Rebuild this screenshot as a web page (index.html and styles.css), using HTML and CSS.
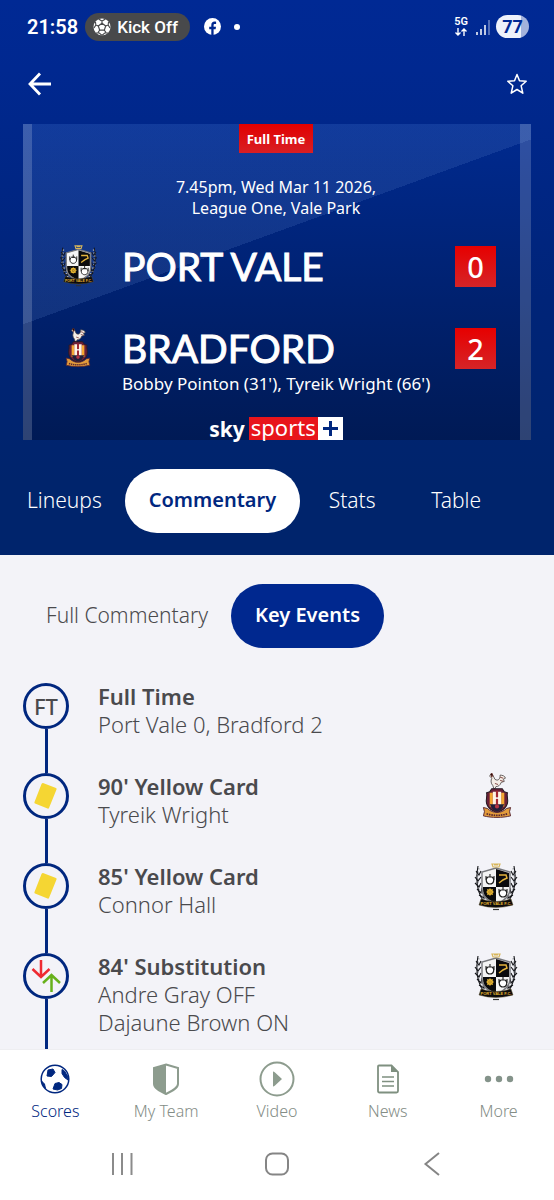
FILE: index.html
```html
<!DOCTYPE html>
<html lang="en">
<head>
<meta charset="utf-8">
<meta name="viewport" content="width=device-width, initial-scale=1">
<title>Port Vale 0, Bradford 2 - Key Events</title>
<link rel="stylesheet" href="styles.css">
</head>
<body>
<svg class="defs" aria-hidden="true">
  <defs>
    <symbol id="port-vale" viewBox="0 0 42 48">
      <g fill="none" stroke="#b4b6bb" stroke-width="2.600"><path d="M3.500 5C1 15 2 28 10 38M38.500 5c2.500 10 1.500 23-6.500 33" stroke-dasharray="1.500 2"/></g>
      <g fill="none" stroke="#15161a" stroke-width="1.100"><path d="M3 3C1 14 1 28 9 39M39 3c2 11 2 25-6 36"/><path d="M1 8l3 4 2-4M0 14l3 4 3-4M0 20l4 4 2-4M2 26l4 4 1-5M4 32l5 3v-5M41 8l-3 4-2-4M42 14l-3 4-3-4M42 20l-4 4-2-4M40 26l-4 4-1-5M38 32l-5 3v-5"/></g>
      <path d="M21 5l14 4v17c0 8-6 12-14 15C13 38 7 34 7 26V9z" fill="#f4f4f4" stroke="#77787c" stroke-width="1.400"/>
      <path d="M21 6l13 4v14H21zM8 24h13v16C13 37 8 33 8 26z" fill="#0b0b0d"/>
      <path d="M17 1h8l-1 3h-6zM19 2h4" fill="none" stroke="#d8b65a" stroke-width="1.200"/>
      <path d="M24 12h7l1 3-4 2-4 3" fill="none" stroke="#e3b33c" stroke-width="1.500"/>
      <circle cx="15" cy="29" r="2.200" fill="none" stroke="#e7b532" stroke-width="1.700"/>
      <path d="M15 25v8M11 29h8M12 26l6 6M18 26l-6 6" stroke="#e7b532" stroke-width=".7"/>
      <g fill="#fff" stroke="#222" stroke-width="1.100"><path d="M13 14c-3 2-2 7 2 7s5-5 2-7zM13 14h4M15 11v3M11 13v4M19 13v4"/><path d="M26 27c-3 2-2 7 2 7s5-5 2-7zM26 27h4M28 24v3M24 26v4M32 26v4"/></g>
      <path d="M6 36q15 5 30 0l2 6q-17 5-34 0z" fill="#0b0b0d" stroke="#5d512f" stroke-width=".5"/>
      <text x="21" y="42" class="crest-name">PORT VALE F.C.</text>
      <path d="M18 46.500h6" stroke="#333" stroke-width="1.200"/>
    </symbol>
    <symbol id="bradford" viewBox="0 0 28 44">
      <path d="M8 1l2 1 2 4c3 2 5 0 5-4 2 0 5 1 5 3l-2 1 1 2-3 1c-1 3-3 4-5 4l-1 2h-1l-1-3C8 10 8 7 9 5L7 3z" fill="#f5eee7" stroke="#4f4948" stroke-width=".8"/>
      <path d="M8 1l1-1 1 2-1 2zM12 10l3 1M17 4l3 1M17 7l3 1" stroke="#73302c" stroke-width=".8"/>
      <path d="M9 15h10l2 3 3 1c-1 3 1 6 0 10-1 5-5 7-10 9C9 36 5 34 4 29c-1-4 1-7 0-10l3-1z" fill="#6b2037" stroke="#261b23" stroke-width="1"/>
      <path d="M7 19h3v13H7zM18 19h3v13h-3z" fill="#f5a832"/>
      <path d="M10 18h3v13h-3zM15 18h3v13h-3z" fill="#fff4e3"/>
      <path d="M13 17h2v15h-2z" fill="#a42932"/><path d="M12 24h4" stroke="#fff" stroke-width="1.400"/>
      <path d="M7 30h14l-3 5-4 2-4-2z" fill="#202039"/><circle cx="14" cy="32" r="2" fill="#b43544"/>
      <path d="M1 33l4 1c5 5 13 5 18 0l4-1-1 4 1 4c-8 2-18 2-26 0l1-4z" fill="#e29b3b" stroke="#592630" stroke-width=".9"/>
      <path d="M4 39q10 3 20 0" fill="none" stroke="#592630" stroke-width="1.600" stroke-dasharray="1.500 .8"/>
    </symbol>
  </defs>
</svg>
<div class="screen">
  <header class="top">
    <div class="status">
      <span class="clock">21:58</span>
      <span class="live-pill">
        <svg width="18" height="18" viewBox="0 0 18 18" aria-hidden="true"><circle cx="9" cy="9" r="8.500" fill="#fff"/><path d="M9 5.200l3.700 2.700-1.400 4.200H6.700L5.300 7.900z" fill="#fff" stroke="#48494b" stroke-width="1.200"/><path d="M9 2.500v3M2.600 7l3 1M15.400 7l-3 1M5 14.500l1.900-2.600M13 14.500l-1.900-2.600M5.500 1l3.500 2 3.500-2M1 10l1.800-3-.3-3M17 10l-1.800-3 .3-3M3 15h3.300l2.700 2.400M15 15h-3.300L9 17.400" fill="none" stroke="#48494b" stroke-width="1.100"/></svg>
        Kick Off
      </span>
      <svg class="fb" width="17" height="17" viewBox="0 0 17 17" role="img" aria-label="Facebook"><circle cx="8.500" cy="8.500" r="8.500" fill="#fff"/><path d="M7.300 17v-5.800H5.200V8.700h2.100V7.200c0-2.400 1.200-3.600 3.300-3.600.6 0 1.100.1 1.500.2V6h-1.200c-1 0-1.300.5-1.300 1.300v1.400h2.400l-.4 2.500h-2V17z" fill="#00288f"/></svg>
      <span class="dot"></span>
      <span class="network"><span>5G</span><svg width="12" height="8" viewBox="0 0 12 8" aria-hidden="true"><path d="M3 0v7M.5 4.500L3 7l2.500-2.500M9 8V1M6.500 3.500L9 1l2.500 2.500" fill="none" stroke="#fff" stroke-width="1.400"/></svg></span>
      <svg class="signal" width="14" height="16" viewBox="0 0 14 16" role="img" aria-label="Signal"><path d="M1 13v3M5 10v6M9 6v10" stroke="#fff" stroke-width="1.500"/><path d="M13 1v15" stroke="#7089c7" stroke-width="1.500"/></svg>
      <span class="battery">77</span>
    </div>
    <div class="appbar">
      <button class="icon-btn" aria-label="Back"><svg width="24" height="24" viewBox="0 0 24 24"><path d="M12 1.500L2 12l10 10.500M2 12h21" fill="none" stroke="#fff" stroke-width="2.800"/></svg></button>
      <button class="icon-btn" aria-label="Favourite"><svg width="20" height="22" viewBox="0 0 20 22"><path d="M10 1.500l2.500 6.300 6.700.5-5.100 4.400 1.700 7.500L10 16.500l-5.800 3.700 1.700-7.500L.8 8.300l6.700-.5z" fill="none" stroke="#fff" stroke-width="1.500" stroke-linejoin="round"/></svg></button>
    </div>
    <section class="card">
      <strong class="state">Full Time</strong>
      <p class="meta">7.45pm, Wed Mar 11 2026,<br>League One, Vale Park</p>
      <div class="team"><svg class="crest crest-pv"><use href="#port-vale"/></svg><h1>PORT VALE</h1><span class="score">0</span></div>
      <div class="team second"><svg class="crest crest-bc"><use href="#bradford"/></svg><h1>BRADFORD</h1><span class="score">2</span></div>
      <p class="scorers">Bobby Pointon (31'), Tyreik Wright (66')</p>
      <div class="brand"><span class="sky">sky</span><span class="sports">sports</span><svg class="plus" width="25" height="23" viewBox="0 0 25 23" role="img" aria-label="plus"><path d="M12.500 4v15M5 11.500h15" stroke="#00277f" stroke-width="3"/></svg></div>
    </section>
    <nav class="tabs" aria-label="Match">
      <a href="#lineups">Lineups</a><a class="active" href="#commentary">Commentary</a><a href="#stats">Stats</a><a href="#table">Table</a>
    </nav>
  </header>
  <main class="content">
    <div class="filters"><button>Full Commentary</button><button class="active">Key Events</button></div>
    <ol class="events">
      <li><div class="rail"><span class="node">FT</span></div><div class="text"><h2>Full Time</h2><p>Port Vale 0, Bradford 2</p></div></li>
      <li><div class="rail"><span class="node"><svg width="26" height="28" viewBox="0 0 26 28"><path d="M10 1l13 5q1 .5.500 1.500L16 26q-.5 1-1.500.5L2 21.500q-1-.5-.5-1.500L8.500 2q.5-1 1.500-1z" fill="#f5d633"/></svg></span></div><div class="text"><h2>90' Yellow Card</h2><p>Tyreik Wright</p></div><svg class="badge badge-bc"><use href="#bradford"/></svg></li>
      <li><div class="rail"><span class="node"><svg width="26" height="28" viewBox="0 0 26 28"><path d="M10 1l13 5q1 .5.500 1.500L16 26q-.5 1-1.500.5L2 21.500q-1-.5-.5-1.500L8.500 2q.5-1 1.500-1z" fill="#f5d633"/></svg></span></div><div class="text"><h2>85' Yellow Card</h2><p>Connor Hall</p></div><svg class="badge badge-pv"><use href="#port-vale"/></svg></li>
      <li><div class="rail"><span class="node"><svg width="30" height="34" viewBox="0 0 30 34"><path d="M10 1v17M1.500 10l8.500 8 8.500-8" fill="none" stroke="#ee2a31" stroke-width="2.500"/><path d="M20.500 33V16M12 24l8.500-8 8.500 8" fill="none" stroke="#67b11b" stroke-width="2.500"/></svg></span></div><div class="text"><h2>84' Substitution</h2><p>Andre Gray OFF</p><p>Dajaune Brown ON</p></div><svg class="badge badge-pv"><use href="#port-vale"/></svg></li>
    </ol>
  </main>
  <nav class="bottom" aria-label="Main">
    <a class="current" href="#scores"><svg width="30" height="30" viewBox="0 0 30 30"><circle cx="15" cy="15" r="13.800" fill="none" stroke="#00277f" stroke-width="1.500"/><path d="M8 6l5-1 2 3.500-3.500 4L7 12zM22 5.500l2.500 1.500 3 5 .5 4-3.500-2.500-2.500-4zM15 19.500l4-1 3 2-.5 4-4 1.500-4.500-1zM1.500 17l3 3 1 4.500-3-4z" fill="#00277f" stroke="#00277f"/></svg>Scores</a>
    <a href="#team"><svg width="28" height="32" viewBox="0 0 28 32"><path d="M14 1.500L26 5v16c0 4-6 7-12 10C8 28 2 25 2 21V5z" fill="#fff" stroke="#8d9c8e" stroke-width="2"/><path d="M14 1.500V31C8 28 2 25 2 21V5z" fill="#8d9c8e"/></svg>My Team</a>
    <a href="#video"><svg width="36" height="36" viewBox="0 0 36 36"><circle cx="18" cy="18" r="16.500" fill="none" stroke="#8d9c8e" stroke-width="2"/><path d="M14 10.500q1 0 2 1l7 6.500-7 6.500q-1 1-2 1z" fill="#8d9c8e"/></svg>Video</a>
    <a href="#news"><svg width="24" height="30" viewBox="0 0 24 30"><path d="M3 1.500h12.500L22 8v19q0 1.500-1.500 1.500h-17Q2 28.500 2 27V2.500q0-1 1-1z" fill="none" stroke="#7f9080" stroke-width="1.800"/><path d="M15 1v7h7.500z" fill="#7f9080"/><path d="M6 13h12M6 17.500h12M6 22h12" stroke="#7f9080" stroke-width="1.600"/></svg>News</a>
    <a href="#more"><svg width="30" height="8" viewBox="0 0 30 8"><g fill="#84938a"><circle cx="4" cy="4" r="3.200"/><circle cx="15" cy="4" r="3.200"/><circle cx="26" cy="4" r="3.200"/></g></svg>More</a>
  </nav>
  <div class="system">
    <button aria-label="Recent apps"><svg width="24" height="24" viewBox="0 0 24 24"><path d="M3 1v22M12 1v22M21.500 1v22" stroke="#8b8b8b" stroke-width="2"/></svg></button>
    <button aria-label="Home"><svg width="26" height="26" viewBox="0 0 26 26"><rect x="2" y="2.500" width="22" height="21" rx="6.500" fill="none" stroke="#858585" stroke-width="2"/></svg></button>
    <button aria-label="System back"><svg width="18" height="24" viewBox="0 0 18 24"><path d="M16 1L2.500 12 16 23" fill="none" stroke="#858585" stroke-width="2"/></svg></button>
  </div>
</div>
</body>
</html>
```
FILE: styles.css
```css
* { box-sizing: border-box; }
body { margin: 0; font-family: "Noto Sans", sans-serif; color: #4a4a4d; background: #f3f3f8; }
h1, h2, p, ol { margin: 0; padding: 0; }
button { border: 0; padding: 0; background: none; font: inherit; color: inherit; }
a { color: inherit; text-decoration: none; }
svg { display: block; flex: none; }
.defs { position: absolute; width: 0; height: 0; }
.crest-name { font: bold 4px "Liberation Sans", sans-serif; fill: #e7b532; text-anchor: middle; }

.screen { display: flex; flex-direction: column; height: 100vh; }
.top { flex: none; color: #fff; background: linear-gradient(#002994, #002890 70px, #002478 300px, #00246c 480px); }

.status { display: flex; align-items: center; height: 53px; padding: 0 25px 0 27px; font-family: Roboto, sans-serif; }
.clock { font-size: 20px; font-weight: 600; }
.live-pill { display: flex; align-items: center; gap: 6px; height: 28px; margin-left: 7px; padding: 0 12px 0 8px; border-radius: 14px; background: #48494b; font-size: 17px; font-weight: 500; }
.fb { margin-left: 14px; }
.dot { width: 6px; height: 6px; margin-left: 13px; border-radius: 50%; background: #fff; }
.network { display: grid; justify-items: center; gap: 1px; margin-left: auto; font-size: 11px; line-height: 10px; font-weight: 600; }
.signal { margin-left: 8px; }
.battery { width: 33px; height: 23px; margin-left: 6px; border-radius: 12px; background: linear-gradient(90deg, #eef2fb 77%, #a3b2dc 77%); color: #002994; font-size: 18px; line-height: 23px; font-weight: 700; text-align: center; }

.appbar { display: flex; align-items: center; justify-content: space-between; height: 62px; padding: 0 27px 0 28px; }

.card {
  display: flex; flex-direction: column; align-items: center; margin: 9px 23px 0;
  border: solid rgba(255, 255, 255, .18); border-width: 0 11px 0 9px;
  background:
    linear-gradient(160deg, rgba(110, 150, 220, .16) 0, rgba(110, 150, 220, .16) 40%, transparent 40%) border-box,
    linear-gradient(#002a90, #001a55) border-box;
}
.state { height: 29px; padding: 0 8px; background: linear-gradient(#e10000, #d81f24); font-size: 13px; line-height: 30px; }
.meta { margin-top: 24px; font-size: 16px; line-height: 21px; text-align: center; }
.team { display: flex; align-items: center; width: 100%; height: 40px; margin-top: 27px; padding: 0 24px 0 28px; }
.second { margin-top: 42px; }
.crest-pv { width: 37px; height: 42px; }
.crest-bc { width: 26px; height: 40px; margin: 0 6px 0 5px; }
.team h1 { flex: 1; margin-left: 25px; font: 400 39px/40px Lato, sans-serif; -webkit-text-stroke: 1px #fff; }
.score { width: 41px; height: 41px; background: linear-gradient(#e60000, #d62427); font-size: 29px; font-weight: 500; line-height: 41px; text-align: center; }
.scorers { align-self: flex-start; margin: 5px 0 0 90px; font-size: 17px; line-height: 21px; white-space: nowrap; }
.brand { display: flex; align-items: center; height: 23px; margin-top: 23px; font-size: 22px; line-height: 22px; }
.sky { margin-right: 4px; font-size: 21px; line-height: 20px; font-weight: 700; }
.sports { height: 23px; padding: 0 2px; background: #e8151b; line-height: 20px; }
.plus { background: #fff; }

.tabs, .filters { display: flex; align-items: center; font-size: 21px; line-height: 28px; font-weight: 300; }
.tabs { padding: 29px 0 22px 4px; }
.tabs a, .filters button { padding: 17px 23px 19px; text-align: center; }
.tabs a { min-width: 104px; }
.tabs .active, .filters .active { padding: 17px 24px 19px; border-radius: 32px; font-size: 20px; font-weight: 600; }
.tabs .active { background: #fff; color: #00277f; }

.content { flex: 1; min-height: 0; overflow: hidden; }
.filters { padding: 29px 23px 0; }
.filters .active { background: #00288f; color: #fff; }
.events { list-style: none; padding: 35px 35px 0 23px; }
.events li { display: flex; min-height: 90px; }
.events li:last-child { min-height: 120px; }
.rail { display: flex; flex-direction: column; align-items: center; width: 46px; }
.rail::after { content: ""; flex: 1; width: 3px; background: #00277f; }
.node { display: grid; place-items: center; width: 46px; height: 46px; border: 3px solid #00277f; border-radius: 50%; font-size: 22px; font-weight: 500; }
.text { flex: 1; margin: -1px 0 0 29px; font-size: 22px; line-height: 28px; font-weight: 300; }
.text h2 { font-size: 22px; font-weight: 600; }
.badge-pv { width: 46px; height: 48px; }
.badge-bc { width: 30px; height: 46px; margin-right: 7px; }

.bottom { flex: none; display: grid; grid-template-columns: repeat(5, 1fr); height: 78px; border-top: 1px solid #eeeef1; background: #fff; color: #848d86; font-size: 16px; font-weight: 300; }
.bottom a { display: grid; grid-template-rows: 38px 20px; place-items: center; align-content: start; row-gap: 3px; padding-top: 10px; line-height: 20px; }
.bottom .current { color: #00277f; }
.system { flex: none; display: grid; grid-template-columns: repeat(3, 1fr); place-items: center; height: 73px; padding: 0 45px; background: #fff; }
```
